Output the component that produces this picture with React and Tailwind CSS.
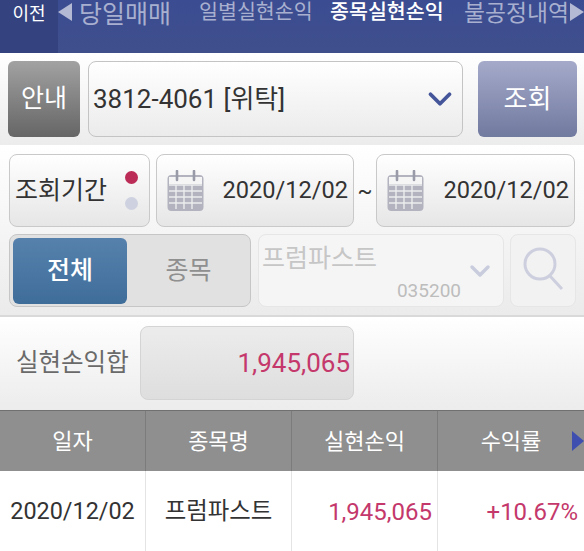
import React from 'react';
import { ChevronDown } from 'lucide-react';

const CalendarIcon = () => (
  <svg width="37" height="42" viewBox="0 0 37 42" className="shrink-0">
    <rect x="0.5" y="5" width="36" height="36" rx="4" fill="#b2b3bf" />
    <rect x="2" y="7" width="33" height="7" fill="#f5f5f6" />
    <path d="M2 15h33M2 21h33M2 27h33M2 33h33M9 15v24M17 15v24M25 15v24" stroke="#eceded" strokeWidth="1.4" />
    <path d="M10 1v9M27 1v9" stroke="#9a9ba8" strokeWidth="2.6" strokeLinecap="round" />
  </svg>
);

const DateBox = ({ width }) => (
  <div className={`flex h-[73px] ${width} items-center justify-between rounded-lg border border-[#c9c9c9] bg-gradient-to-b from-white to-[#e6e6e6] pl-[10px] pr-[5px]`}>
    <CalendarIcon />
    <span className="text-[23.6px] text-[#333333]">2020/12/02</span>
  </div>
);

const HeaderCell = ({ width, children }) => (
  <div className={`flex h-full ${width} items-center justify-center border-r border-[#7c7c7c] text-[22px] text-white`}>
    {children}
  </div>
);

const RowCell = ({ width, className, children }) => (
  <div className={`flex h-full ${width} items-center border-r border-[#e4e4e4] pt-[2px] ${className}`}>
    {children}
  </div>
);

export default function App() {
  return (
    <div className="h-[551px] w-[584px] overflow-hidden bg-white font-['Roboto','Noto_Sans_CJK_KR',sans-serif]">
      {/* tab bar, text is cut off at the top edge */}
      <div className="flex h-[53px] items-start overflow-hidden bg-gradient-to-b from-[#3b4c92] to-[#3f4f8c]">
        <div className="flex h-full w-[58px] shrink-0 justify-center bg-[#34437f] text-[18px] text-white">이전</div>
        <div className="mt-[3px] h-0 w-0 shrink-0 border-y-[9px] border-r-[14px] border-y-transparent border-r-[#b4bad3]" />
        <div className="-mt-[4px] ml-[7px] w-[89px] shrink-0 whitespace-nowrap text-[25px] text-[#a9b0cf]">당일매매</div>
        <div className="-mt-[3px] ml-[31px] w-[112px] shrink-0 whitespace-nowrap text-[20.6px] text-[#a9b0cf]">일별실현손익</div>
        <div className="-mt-[3px] ml-[19px] w-[113px] shrink-0 whitespace-nowrap text-[20.6px] font-medium text-white">종목실현손익</div>
        <div className="-mt-[3px] ml-[21px] w-[106px] shrink-0 whitespace-nowrap text-[22.8px] text-[#a9b0cf]">불공정내역</div>
        <div className="mt-[3px] h-0 w-0 shrink-0 border-y-[9px] border-l-[14px] border-y-transparent border-l-[#b4bad3]" />
      </div>

      {/* account row */}
      <div className="flex h-[92px] items-start bg-gradient-to-b from-white to-[#ececec] pl-[8px] pt-[8px]">
        <div className="flex h-[76px] w-[72px] items-center justify-center rounded-md bg-gradient-to-b from-[#a2a2a2] to-[#666666] text-[25px] text-white">안내</div>
        <div className="ml-[8px] flex h-[76px] w-[375px] items-center justify-between rounded-lg border border-[#c4c4c4] bg-gradient-to-b from-white to-[#ebebeb] pl-[4px] pr-[3px]">
          <span className="text-[26px] text-[#333333]">3812-4061 [위탁]</span>
          <ChevronDown size={38} strokeWidth={2.4} className="text-[#44559a]" />
        </div>
        <div className="ml-[15px] flex h-[76px] w-[99px] items-center justify-center rounded-md bg-gradient-to-b from-[#a5aaca] to-[#717a9f] text-[26px] text-white">조회</div>
      </div>

      {/* search options */}
      <div className="flex h-[172px] flex-col gap-[7px] border-b-[2px] border-[#d9d9d9] bg-gradient-to-b from-white to-[#ebebeb] pl-[9px] pt-[9px]">
        <div className="flex items-center">
          <div className="flex h-[73px] w-[141px] items-center justify-between rounded-lg border border-[#c9c9c9] bg-gradient-to-b from-white to-[#e6e6e6] pl-[5px] pr-[11px]">
            <span className="text-[25px] text-[#333333]">조회기간</span>
            <div className="flex flex-col gap-[13px]">
              <div className="h-[13px] w-[13px] rounded-full bg-[#bb2c56]" />
              <div className="h-[13px] w-[13px] rounded-full bg-[#ced2e0]" />
            </div>
          </div>
          <div className="ml-[6px]"><DateBox width="w-[198px]" /></div>
          <span className="w-[22px] text-center text-[22px] text-[#333333]">~</span>
          <div><DateBox width="w-[199px]" /></div>
        </div>
        <div className="flex items-center">
          <div className="flex h-[73px] w-[242px] items-center rounded-lg border border-[#c6c6c6] bg-[#e1e1e1] pl-[3px]">
            <div className="flex h-[66px] w-[114px] items-center justify-center rounded-md bg-gradient-to-b from-[#5681ad] to-[#3f6d9a] text-[25px] font-medium text-white">전체</div>
            <div className="flex-1 text-center text-[25px] text-[#8f8f8f]">종목</div>
          </div>
          <div className="relative ml-[7px] h-[73px] w-[246px] rounded-lg border border-[#e6e6e6] bg-[#f5f5f5] pl-[3px] pt-[5px] text-[25px] text-[#c6c6c6]">
            프럼파스트
            <ChevronDown size={32} strokeWidth={2.6} className="absolute right-[7px] top-[20px] text-[#c9ccdc]" />
            <span className="absolute bottom-[1px] right-[42px] text-[19px] text-[#bdbdbd]">035200</span>
          </div>
          <div className="ml-[6px] flex h-[73px] w-[66px] items-center justify-center rounded-lg border border-[#e6e6e6] bg-[#f2f2f2]">
            <svg width="42" height="46" viewBox="0 0 42 46" fill="none" stroke="#cdcfdf" strokeWidth="3" className="-mt-[3px]">
              <circle cx="18" cy="18" r="15" />
              <path d="M28 30l12 13" />
            </svg>
          </div>
        </div>
      </div>

      {/* sum */}
      <div className="flex h-[93px] items-center bg-gradient-to-b from-white to-[#ececec] pl-[16px]">
        <span className="w-[124px] text-[24.5px] text-[#6a6a6a]">실현손익합</span>
        <div className="-mt-[1px] flex h-[74px] w-[214px] items-center justify-end rounded-lg border border-[#d4d4d4] bg-gradient-to-b from-[#ececec] to-[#dedede] pr-[3px] text-[26px] text-[#c4386b]">1,945,065</div>
      </div>

      {/* table */}
      <div className="relative flex h-[61px] items-center border-t border-[#707070] bg-[#8f8f8f]">
        <HeaderCell width="w-[146px]">일자</HeaderCell>
        <HeaderCell width="w-[146px]">종목명</HeaderCell>
        <HeaderCell width="w-[146px]">실현손익</HeaderCell>
        <div className="flex h-full w-[146px] items-center justify-center text-[22px] text-white">수익률</div>
        <div className="absolute right-0 top-[20px] h-0 w-0 border-y-[10px] border-l-[12px] border-y-transparent border-l-[#3f4fb0]" />
      </div>
      <div className="flex h-[80px] items-center bg-white">
        <RowCell width="w-[146px]" className="justify-center text-[23.4px] text-[#333333]">2020/12/02</RowCell>
        <RowCell width="w-[146px]" className="justify-center text-[23.4px] text-[#333333]">프럼파스트</RowCell>
        <RowCell width="w-[146px]" className="justify-end pr-[5px] text-[24px] text-[#c4386b]">1,945,065</RowCell>
        <div className="flex h-full w-[146px] items-center justify-end pr-[6px] pt-[2px] text-[24px] text-[#c4386b]">+10.67%</div>
      </div>
    </div>
  );
}
